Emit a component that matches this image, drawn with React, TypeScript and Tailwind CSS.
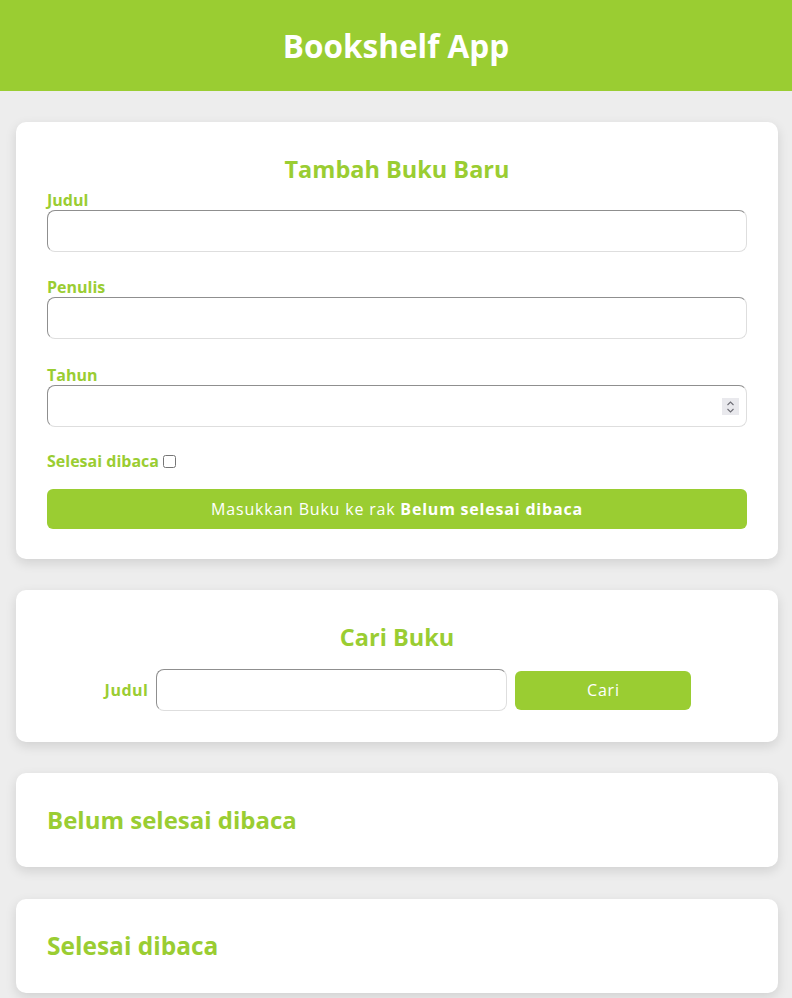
import React from "react";

const inputCls =
  "w-full h-[42px] rounded-lg border border-t-[#8f8f8f] border-l-[#8f8f8f] border-b-[#dedede] border-r-[#dedede] bg-white px-2 text-base outline-none";

export default function App() {
  return (
    <div
      className="min-h-[998px] bg-[#ededed] pb-4"
      style={{ fontFamily: '"Open Sans", "DejaVu Sans", sans-serif' }}
    >
      <header className="h-[91px] bg-[#9acd32] flex items-center justify-center">
        <h1 className="text-[31.5px] font-bold text-white">Bookshelf App</h1>
      </header>

      <main className="flex flex-col gap-[31px] pt-[31px] ml-4 mr-[14px]">
        <section className="bg-white rounded-[10px] shadow-[0_4px_12px_rgba(0,0,0,0.12)] px-[31px] pt-[32px] pb-[30px]">
          <h2 className="text-center text-[23.5px] font-bold text-[#9acd32] leading-[30px]">
            Tambah Buku Baru
          </h2>
          <form className="flex flex-col mt-[6px]" onSubmit={(e) => e.preventDefault()}>
            <label className="text-base font-bold text-[#9acd32] leading-5">Judul</label>
            <input className={inputCls} type="text" />
            <label className="text-base font-bold text-[#9acd32] leading-5 mt-[25px]">Penulis</label>
            <input className={inputCls} type="text" />
            <label className="text-base font-bold text-[#9acd32] leading-5 mt-[26px]">Tahun</label>
            <div className="relative">
              <input className={inputCls} type="text" />
              <div className="absolute right-[8px] top-[13px] w-[17px] h-[17px] bg-[#e9e9ed] flex flex-col items-center justify-center">
                <svg width="9" height="14" viewBox="0 0 9 14" fill="none" stroke="#6d6d75" strokeWidth="1.1">
                  <path d="M1.5 5 L4.5 2 L7.5 5" />
                  <path d="M1.5 9 L4.5 12 L7.5 9" />
                </svg>
              </div>
            </div>
            <div className="flex items-center gap-1 mt-6">
              <label className="text-base font-bold text-[#9acd32] leading-5">Selesai dibaca</label>
              <input type="checkbox" className="w-[13px] h-[13px]" />
            </div>
            <button className="mt-[18px] h-10 rounded-md bg-[#9acd32] text-white text-base tracking-[0.8px]">
              Masukkan Buku ke rak <span className="font-bold">Belum selesai dibaca</span>
            </button>
          </form>
        </section>

        <section className="bg-white rounded-[10px] shadow-[0_4px_12px_rgba(0,0,0,0.12)] px-[31px] pt-[32px] pb-[31px]">
          <h2 className="text-center text-[23.5px] font-bold text-[#9acd32] leading-[30px]">
            Cari Buku
          </h2>
          <form className="flex items-center justify-center gap-2 mt-[17px] pl-[2px]" onSubmit={(e) => e.preventDefault()}>
            <label className="text-base font-bold text-[#9acd32] tracking-[0.5px]">Judul</label>
            <input className={inputCls + " !w-[351px]"} type="text" />
            <button className="w-[176px] h-[39px] rounded-md bg-[#9acd32] text-white text-base tracking-[0.8px]">
              Cari
            </button>
          </form>
        </section>

        <section className="bg-white rounded-[10px] shadow-[0_4px_12px_rgba(0,0,0,0.12)] px-[31px] h-[94px] flex items-center">
          <h2 className="text-[24px] font-bold text-[#9acd32]">Belum selesai dibaca</h2>
        </section>

        <section className="bg-white rounded-[10px] shadow-[0_4px_12px_rgba(0,0,0,0.12)] px-[31px] h-[94px] mt-px flex items-center">
          <h2 className="text-[24.5px] font-bold text-[#9acd32]">Selesai dibaca</h2>
        </section>
      </main>
    </div>
  );
}
